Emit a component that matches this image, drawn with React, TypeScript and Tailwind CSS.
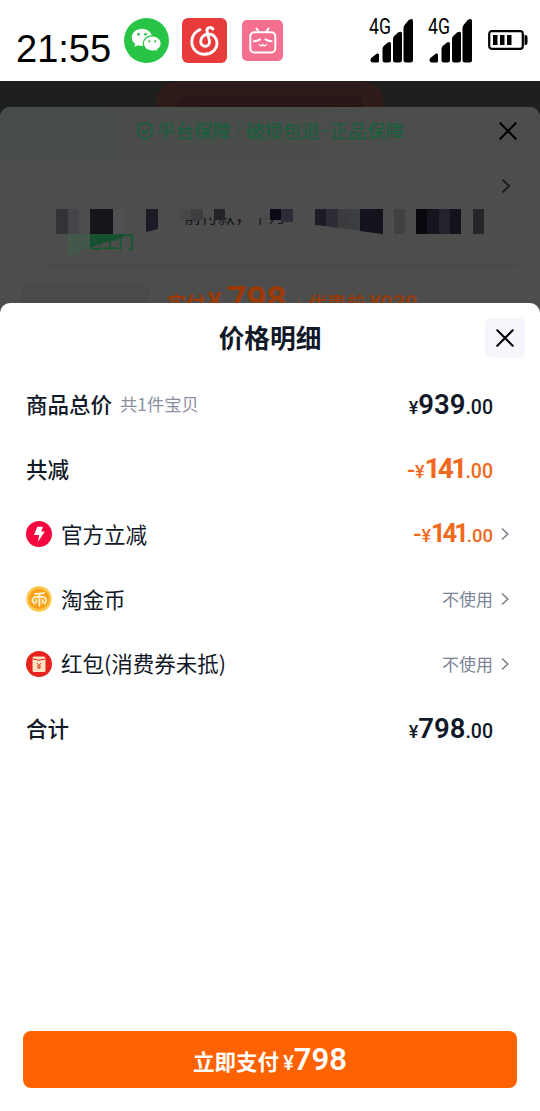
import type { ReactNode } from "react";

type PriceProps = {
  amount: string;
  className?: string;
  amountClass?: string;
  centsClass?: string;
  minus?: boolean;
};

const Price = ({
  amount,
  className = "",
  amountClass = "text-[27.5px]",
  centsClass = "text-[19.5px]",
  minus = false,
}: PriceProps) => {
  return (
    <span
      className={`flex items-baseline font-['Roboto','Noto_Sans_CJK_SC',sans-serif] font-semibold leading-none ${className}`}
    >
      {minus && <span className="text-[24px] font-medium">-</span>}
      <span className="text-[18px] font-medium">¥</span>
      <span className={amountClass}>{amount}</span>
      <span className={`font-medium ${centsClass}`}>.00</span>
    </span>
  );
};

const Arrow = ({ className = "" }: { className?: string }) => (
  <svg viewBox="0 0 8 14" className={className} fill="none" stroke="currentColor" strokeWidth="1.7">
    <path d="M1 1.5 6.8 7 1 12.5" />
  </svg>
);

const Cross = ({ className = "" }: { className?: string }) => (
  <svg viewBox="0 0 18 18" className={className} fill="none" stroke="currentColor" strokeWidth="2.1" strokeLinecap="round">
    <path d="M1.3 1.3 16.7 16.7M16.7 1.3 1.3 16.7" />
  </svg>
);

const WechatIcon = () => (
  <svg viewBox="0 0 45 45" className="h-[45px] w-[45px]">
    <circle cx="22.5" cy="22.5" r="22.5" fill="#28c445" />
    <path d="M18 10.8c-5.8 0-10.2 3.8-10.2 8.6 0 2.7 1.4 5 3.6 6.6l-1 3.1 3.6-1.9c1.3.4 2.6.6 4 .6 5.7 0 10-3.8 10-8.4 0-4.8-4.3-8.6-10-8.6z" fill="#fff" />
    <path d="M28.3 17.8c-5 0-9 3.4-9 7.7s4 7.7 9 7.7c1.1 0 2.2-.2 3.2-.5l2.9 1.6-.8-2.7c2.2-1.4 3.6-3.6 3.6-6.1 0-4.3-4-7.7-8.9-7.7z" fill="#fff" stroke="#28c445" strokeWidth="1.2" />
    <g fill="#28c445">
      <circle cx="14.5" cy="16.3" r="1.4" />
      <circle cx="21.5" cy="16.3" r="1.4" />
      <circle cx="25.4" cy="23.3" r="1.1" />
      <circle cx="31.2" cy="23.3" r="1.1" />
    </g>
  </svg>
);

const MusicIcon = () => (
  <svg viewBox="0 0 45 45" className="h-[45px] w-[45px]">
    <rect width="45" height="45" rx="6" fill="#e83b3b" />
    <path
      d="M31 11c-2-2.4-6.3-1.8-6 1.700.4 4 2.400 8 2.500 11 0 2.600-1.700 4.600-4.200 4.600s-4.600-2-4.600-4.700c0-4.500 3.800-7.600 8-7.600 4.800 0 8.300 4.200 8.300 9 0 6.500-5.500 11.300-12.500 11.300S9.800 31 9.800 23.700c0-5.300 3.100-9.900 8.200-12"
      fill="none"
      stroke="#fff"
      strokeWidth="2.9"
      strokeLinecap="round"
    />
  </svg>
);

const BiliIcon = () => (
  <svg viewBox="0 0 41 41" className="h-[41px] w-[41px]">
    <rect width="41" height="41" rx="5" fill="#f5708f" />
    <g fill="none" stroke="#fff" strokeWidth="2" strokeLinecap="round">
      <rect x="8.3" y="12.3" width="25" height="20.2" rx="4" />
      <path d="m14.5 8.5 2 3M26.5 8.5l-2 3M12 21.3q3.500-.3 6-2M23.500 19.300q2.500 1.700 6 2" />
      <path d="M17.300 24.500q1.700 2.500 3.500 0 1.800 2.500 3.500 0" strokeWidth="1.3" />
    </g>
  </svg>
);

const Signal = () => (
  <div className="relative h-[46px] w-[45px]">
    <span className="absolute top-0 left-0 origin-left scale-x-[0.8] font-['Roboto'] text-[22px] leading-[18px]">
      4G
    </span>
    <svg viewBox="0 0 45 46" className="h-[46px] w-[45px]">
      <path d="M3.500 39 8 35.500q2-.5 2 1.500v6q0 1.500-1.500 1.500H4q-2.500 0-2.500-2.500 0-2 2-3z" />
      <path d="M13.500 31q0-2 1.500-3.300l3.500-3q3.500-1.700 3.500 1.300v16q0 2.500-2.500 2.500H16Q13.500 44.500 13.500 42z" />
      <path d="M24 21q0-2 1.500-3.300l3.500-3.200q4-2 4 1v26q0 3-2.500 3h-4q-2.500 0-2.500-2.500z" />
      <path d="M34.500 10q0-2 1.500-3.500l3.500-4.300q4.500-2.700 4.500 1V42q0 2.500-2.500 2.500H37q-2.500 0-2.500-2.500z" />
    </svg>
  </div>
);

const Battery = () => (
  <svg viewBox="0 0 40 20" className="h-5 w-10">
    <rect x="1.2" y="1.2" width="33.6" height="17.6" rx="2.5" fill="none" stroke="#000" strokeWidth="2.2" />
    <path d="M5 5h4.500v10H5zM12 5h4.500v10H12zM19 5h4.500v10H19zM36.500 5h1q2 0 2 2v6q0 2-2 2h-1z" />
  </svg>
);

const BoltIcon = () => (
  <svg viewBox="0 0 26 26" className="h-[26px] w-[26px]">
    <circle cx="13" cy="13" r="13" fill="#f5083f" />
    <path d="M11.200 5.800h5.800l-1.800 4.800h3.600l-6.800 10.200 1.100-6.800H8z" fill="#fff" />
  </svg>
);

const CoinIcon = () => (
  <svg viewBox="0 0 26 26" className="h-[26px] w-[26px]">
    <circle cx="13" cy="13" r="12.7" fill="#fdc64b" />
    <circle cx="13" cy="13" r="10.2" fill="#f7a11b" />
    <g fill="none" stroke="#fff0c4" strokeWidth="1.9" strokeLinecap="round" strokeLinejoin="round">
      <path d="M9 7.800q4.500.2 9-.8M13.400 8v11.500" />
      <path d="M8.300 17.500Q5.500 15 7 12.500 8 11 10 11h7q2.300 0 3 2 .6 2.500-1.500 4.500M10.300 16.500V14M16.600 14v2.500" />
    </g>
  </svg>
);

const PacketIcon = () => (
  <svg viewBox="0 0 26 26" className="h-[26px] w-[26px]">
    <circle cx="13" cy="13" r="13" fill="#e5231f" />
    <rect x="6.5" y="5.5" width="13" height="15.5" rx="1.5" fill="#fde3c0" />
    <path d="M6.500 7.800q6.500 3 13 0" fill="none" stroke="#e5231f" strokeWidth="1" />
    <path d="m11 11.800 2 2.700 2-2.700M13 14.500v3.800M11 14.800h4M11 16.600h4" fill="none" stroke="#d8402e" strokeWidth=".9" />
  </svg>
);

// pixelated address line of the order page below
const Mosaic = () => (
  <svg viewBox="0 200 540 60" className="absolute top-[93px] left-0 h-[60px] w-[540px]">
    <path d="M56 209h12v25H56z" fill="#323337" />
    <path d="M68 209h11v25H68z" fill="#464549" />
    <path d="M90 209h23v25H90z" fill="#15151b" />
    <path d="M113 209h11v25h-11z" fill="#504f51" />
    <path d="M146 209h12v20l-12 3z" fill="#1b1b25" />
    <path d="M180 209h11v11h-11z" fill="#484848" />
    <path d="M191 209h12v11h-12z" fill="#3e3e41" />
    <path d="M214 209h11v11h-11z" fill="#222227" />
    <path d="M270 209h11v11h-11z" fill="#0b0b18" />
    <path d="M281 209h12v13h-12z" fill="#2d2c38" />
    <path d="M315 209h11v17l-11-1z" fill="#1c1c25" />
    <path d="M326 209h12v19l-12-2z" fill="#2d2e35" />
    <path d="M338 209h11v20l-11-1z" fill="#3c3b3e" />
    <path d="M349 209h11v22l-11-2z" fill="#3b3f43" />
    <path d="M360 209h23v25l-23-3z" fill="#13131c" />
    <path d="M394 209h11v25h-11z" fill="#414141" />
    <path d="M416 209h11v25h-11z" fill="#08080f" />
    <path d="M427 209h12v25h-12z" fill="#15151e" />
    <path d="M439 209h11v25h-11z" fill="#23242b" />
    <path d="M450 209h11v25h-11z" fill="#14131c" />
    <path d="M473 209h11v25h-11z" fill="#25262a" />
    <path d="M68 234h22v14l-22 8z" fill="#43584b" />
    <path d="M90 234h34v3l-34 10z" fill="#17502f" />
    <path d="M31 194h4v1.500h-4zM478 192h2v1h-2z" fill="#222" />
  </svg>
);

const OrderPage = () => (
  <div className="h-[222px] overflow-hidden bg-[#1e201e]">
    <div className="flex h-[26px] justify-center">
      <div className="mt-px h-10 w-[226px] rounded-t-[18px] bg-[#2e1b1a] pt-[14px]">
        <div className="mx-5 h-6 rounded-t-lg bg-[#291717]" />
      </div>
    </div>
    <div className="relative h-[196px] rounded-t-[10px] bg-[#4d4d4d]">
      <div className="flex h-[53px] items-center rounded-t-[10px] bg-linear-to-r from-[#484c49] to-[#4d4d4d] pb-[5px] pl-[137px] text-[18.5px] text-[#12613a]">
        <svg viewBox="0 0 16 18" className="mr-[4px] h-[18px] w-4 shrink-0" fill="none" stroke="currentColor" strokeWidth="1.6">
          <path d="M8 1 15 3v6.500q0 4.500-7 7.500-7-3-7-7.500V3zM4.500 8.500l2.800 2.800 4.700-4.600" />
        </svg>
        <span className="whitespace-nowrap">平台保障</span>
        <span className="mx-[7px] h-[14px] w-px bg-[#2c5540]" />
        <span className="whitespace-nowrap">破损包退</span>
        <span className="w-[10px] text-center font-['Liberation_Sans'] font-bold">·</span>
        <span className="whitespace-nowrap">正品保障</span>
        <Cross className="ml-[95px] h-[18px] w-[18px] shrink-0 text-black" />
      </div>
      <div className="flex h-[53px] justify-end pt-[18px] pr-[29px]">
        <Arrow className="h-[16px] w-[10px] text-[#1c1c1c]" />
      </div>
      <Mosaic />
      <div className="ml-[184px] flex h-[12px] items-end">
        <div className="flex h-[7px] items-end overflow-hidden text-[17px] leading-[18px] text-[#18181c]">
          <span>前付款，下月</span>
        </div>
      </div>
      <div className="mt-[8px] ml-[86px] flex h-[19px] items-end overflow-hidden text-[16px] leading-[22px] font-medium text-[#0b5a2b]">
        <span>送上门</span>
      </div>
      <div className="mt-[13px] ml-12 h-px w-[470px] bg-[#444]" />
      <div className="flex items-start">
        <div className="mt-[17px] ml-[22px] h-8 w-[128px] rounded-lg bg-[#4a4a4a]" />
        <div className="mt-4 ml-[17px] flex items-baseline font-['Roboto','Noto_Sans_CJK_SC',sans-serif] font-bold leading-[36px] whitespace-nowrap text-[#9c3a06]">
          <span className="text-[19px]">实付</span>
          <span className="ml-[3px] text-[25px]">¥</span>
          <span className="ml-[5px] text-[35px]">798</span>
          <span className="mr-[8px] ml-[10px] text-[15px] font-normal">|</span>
          <span className="text-[19px] font-medium">优惠前</span>
          <span className="ml-1 text-[21.5px] font-medium">¥939</span>
        </div>
      </div>
    </div>
  </div>
);

type RowProps = {
  label: string;
  icon?: ReactNode;
  note?: string;
  children: ReactNode;
  arrow?: boolean;
};

const Row = ({ label, icon, note, children, arrow = false }: RowProps) => (
  <div className="flex h-[64.8px] items-center pr-[31px] pl-[26px]">
    {icon}
    <span className={icon ? "ml-[9px] text-[21.5px]" : "text-[21.5px] font-medium"}>{label}</span>
    {note && <span className="ml-2 text-[17.3px] text-[#8a909f]">{note}</span>}
    <div className="ml-auto">{children}</div>
    <div className="ml-[8px] w-2">{arrow && <Arrow className="h-[14px] w-2 text-[#7f858f]" />}</div>
  </div>
);

const App = () => {
  return (
    <div className="flex h-[1111px] w-[540px] flex-col overflow-hidden bg-[#4d4d4d] font-['Noto_Sans_CJK_SC',sans-serif] text-[#111827]">
      <div className="flex h-[81px] shrink-0 items-start bg-white text-black">
        <span className="mt-[29px] ml-4 w-[108px] font-['Liberation_Sans'] text-[38px] leading-[40px]">21:55</span>
        <div className="mt-[18px]">
          <WechatIcon />
        </div>
        <div className="mt-[18px] ml-[13px]">
          <MusicIcon />
        </div>
        <div className="mt-5 ml-[15px]">
          <BiliIcon />
        </div>
        <div className="mt-[18px] ml-[86px] flex gap-[14px]">
          <Signal />
          <Signal />
        </div>
        <div className="mt-[30px] ml-[15px] shrink-0">
          <Battery />
        </div>
      </div>

      <OrderPage />

      <div className="flex flex-1 flex-col rounded-t-[10px] bg-white">
        <div className="grid h-[69px] grid-cols-[1fr_auto_1fr] items-center">
          <h1 className="col-start-2 text-[25.7px] font-bold">价格明细</h1>
          <button className="mr-[15px] flex h-10 w-10 items-center justify-center justify-self-end rounded-[5px] bg-[#f5f6fb] text-black">
            <Cross className="h-[18px] w-[18px]" />
          </button>
        </div>

        <Row label="商品总价" note="共1件宝贝">
          <Price amount="939" />
        </Row>
        <Row label="共减">
          <Price
            amount="141"
            minus
            amountClass="text-[28px] font-bold tracking-[-2.8px] mr-[1px]"
            className="text-[#f0691c]"
          />
        </Row>
        <Row label="官方立减" icon={<BoltIcon />} arrow>
          <Price
            amount="141"
            minus
            amountClass="text-[25.5px] font-bold tracking-[-3px] mr-[1px]"
            centsClass="text-[18.5px]"
            className="text-[#f0691c]"
          />
        </Row>
        <Row label="淘金币" icon={<CoinIcon />} arrow>
          <span className="text-[17px] text-[#7b8394]">不使用</span>
        </Row>
        <Row label="红包(消费券未抵)" icon={<PacketIcon />} arrow>
          <span className="text-[17px] text-[#7b8394]">不使用</span>
        </Row>
        <Row label="合计">
          <Price amount="798" />
        </Row>

        <button className="mx-[23px] mt-auto mb-[23px] flex h-[57px] items-center justify-center rounded-lg bg-[#ff6200] text-white">
          <span className="flex items-baseline leading-none">
            <span className="text-[21.5px] font-bold">立即支付</span>
            <span className="ml-1 font-['Roboto'] text-[20px] font-medium">¥</span>
            <span className="font-['Roboto'] text-[31px] font-semibold">798</span>
          </span>
        </button>
      </div>
    </div>
  );
};

export default App;
